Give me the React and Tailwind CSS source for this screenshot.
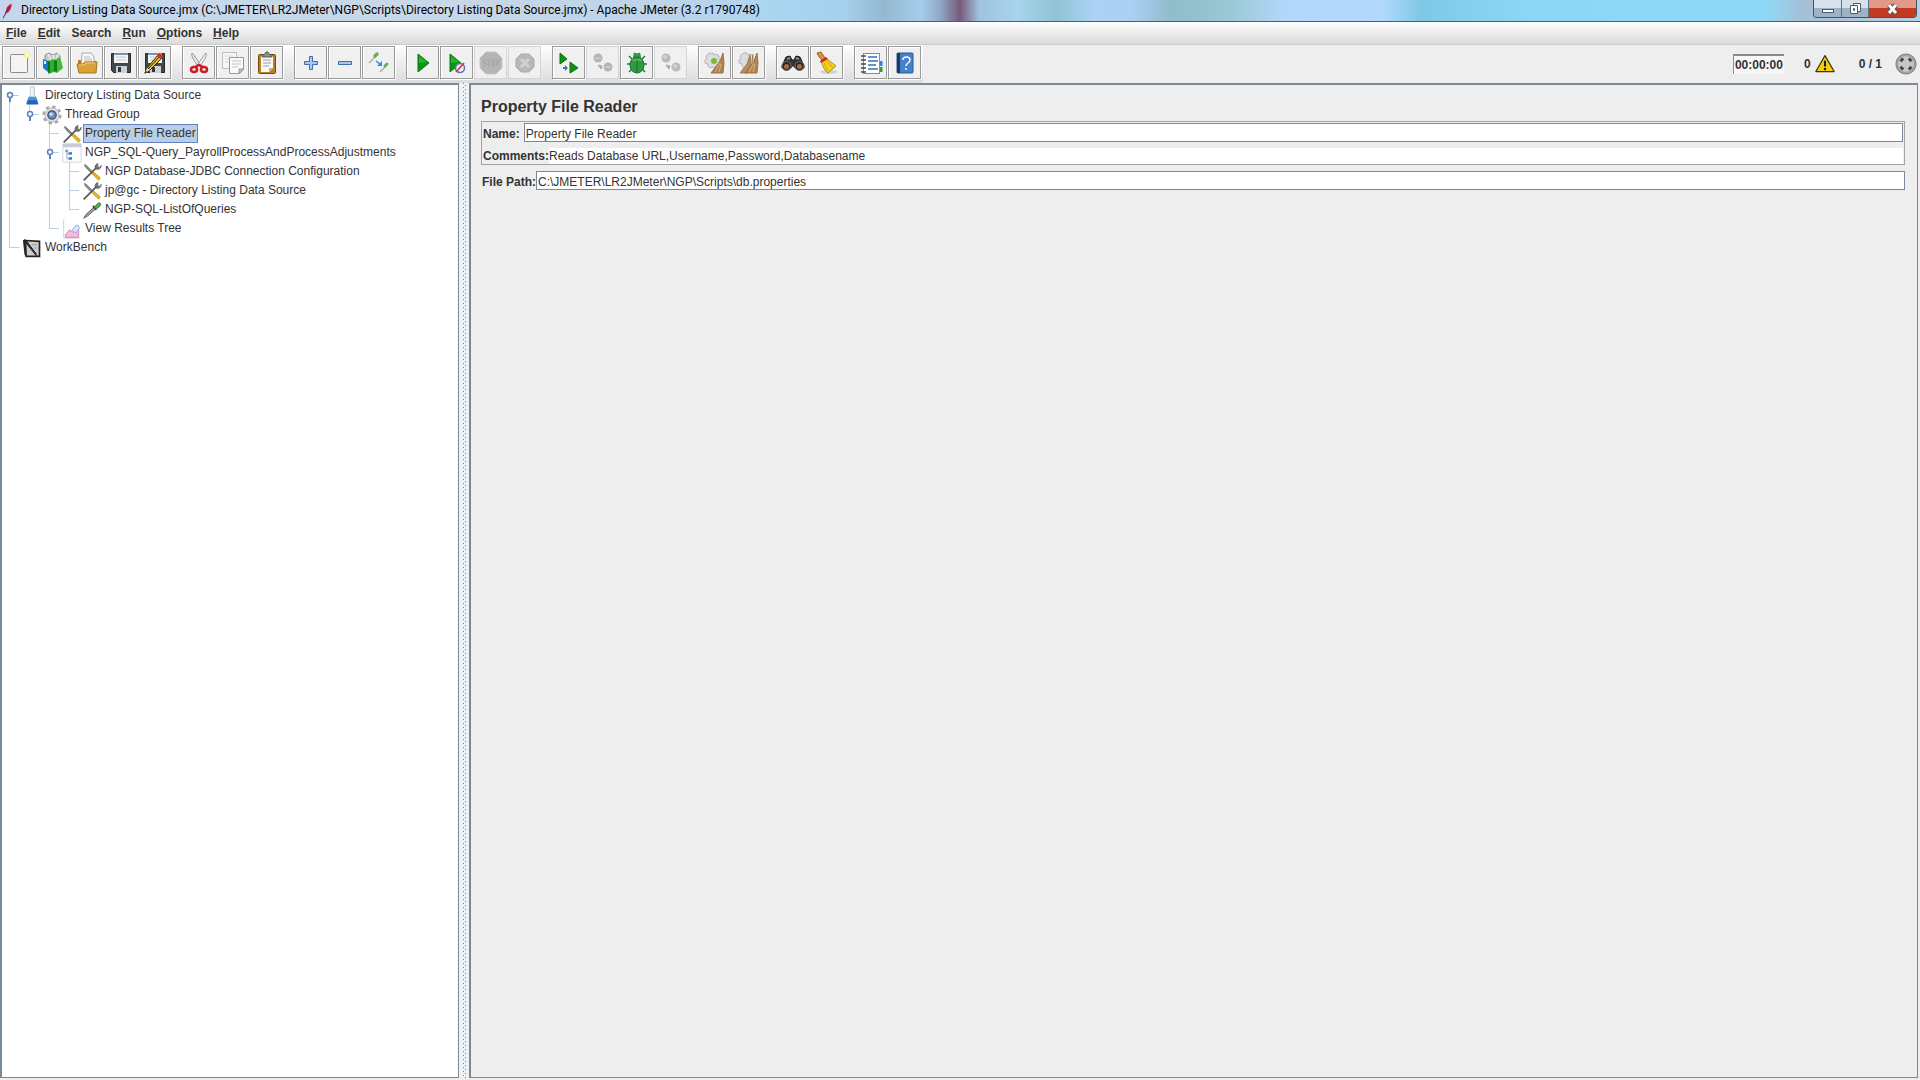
import { useState } from "react";

const Svg = ({ children, size = 24, className = "" }) => (
  <svg width={size} height={size} viewBox="0 0 24 24" fill="none" className={`shrink-0 ${className}`} aria-hidden="true">
    {children}
  </svg>
);

/* ---------- toolbar icons ---------- */

const NewIcon = () => (
  <Svg>
    <rect x="3.5" y="3.5" width="17" height="18" rx="1" fill="#f4f4f2" stroke="#8b8b89" />
    <path d="M6 7v12" stroke="#d9d9d9" strokeDasharray="1 4" />
    <circle cx="20" cy="4" r="3.5" fill="#f8f08a" opacity=".75" />
    <circle cx="20" cy="4" r="2" fill="#fdf9c0" />
  </Svg>
);

const TemplatesIcon = () => (
  <Svg>
    <path d="M4 4l4-2 4 2 4-2 3 3v5l-8 3-7-3z" fill="#c3c8c8" stroke="#8f9696" />
    <path d="M7 3l3 6M12 4l1 5M17 3l-2 6" stroke="#eef0f0" strokeWidth="1.5" />
    <path d="M2 8l5 2v11l-5-4z" fill="#1a78c2" />
    <path d="M4 10v3" stroke="#d9f2ff" strokeWidth="2" />
    <path d="M7 10l6-2v13l-6 2z" fill="#2fae33" />
    <path d="M7 10l2 1v11l-2-1z" fill="#0c7127" />
    <path d="M13 9l6-3 3 11-6 5-3-1z" fill="#43bd31" />
    <path d="M13 9l3 1v11l-3-1z" fill="#157a19" />
  </Svg>
);

const OpenIcon = () => (
  <Svg>
    <path d="M3 9h6l2 1h10v5H3z" fill="#b8801c" />
    <path d="M7 2h9l3 4v9H6z" fill="#f8f8f8" stroke="#aaa" />
    <path d="M9 6h6M9 8h8M9 10h8" stroke="#bcbcbc" />
    <path d="M2 13h6l2-2h12l-1 11H4z" fill="#dca23a" stroke="#a87318" />
    <path d="M4 14h5l2-2h9" stroke="#f6cf7b" />
  </Svg>
);

const Floppy = () => (
  <>
    <path d="M2.5 2.5h19v19h-17l-2-2z" fill="#41474d" stroke="#252a2e" />
    <rect x="5" y="2" width="14" height="10" fill="#f4f6f6" />
    <path d="M5 3h14" stroke="#7895a8" strokeWidth="2" />
    <path d="M7 6h10M7 9h10" stroke="#c4c9cc" />
    <rect x="7" y="15" width="11" height="7" fill="#ccd1d3" />
    <rect x="9" y="16" width="3" height="5" fill="#31373b" />
  </>
);

const SaveIcon = () => (
  <Svg><Floppy /></Svg>
);

const SaveAsIcon = () => (
  <Svg>
    <Floppy />
    <path d="M2 22l2-5L15 4l4 3L7 19z" fill="#e9b62b" stroke="#2c2a22" />
    <path d="M5 18L17 5" stroke="#322c1a" />
    <path d="M14 5l2-3 4 3-2 3z" fill="#d23324" />
    <path d="M2 22l2-5 3 2z" fill="#f2ddb1" />
    <path d="M1 23l2-3 1 1z" fill="#111" />
  </Svg>
);

const CutIcon = () => (
  <Svg>
    <path d="M5 2c-1 3 1 6 6 13l2-2C10 9 8 5 5 2z" fill="#eceded" stroke="#8f9393" />
    <path d="M19 2c1 3-1 6-6 13l-2-2C14 9 16 5 19 2z" fill="#f7f7f7" stroke="#8f9393" />
    <ellipse cx="7" cy="18.5" rx="3" ry="2.5" stroke="#cf1b24" strokeWidth="2.5" />
    <ellipse cx="17" cy="18.5" rx="3" ry="2.5" stroke="#cf1b24" strokeWidth="2.5" />
    <path d="M8 16l4-2 4 2" stroke="#cf1b24" strokeWidth="2.5" />
  </Svg>
);

const CopyIcon = () => (
  <Svg>
    <path d="M1.5 1.5h14v16h-14z" fill="#f7f7f7" stroke="#bdbdbd" />
    <path d="M4 5h8M4 8h4M4 11h4" stroke="#d6d6d6" />
    <path d="M8.5 6.5h14v12l-4 4h-10z" fill="#fafafa" stroke="#999" />
    <path d="M11 10h9M11 13h9M11 16h6" stroke="#c3c3c3" />
    <path d="M18 22v-4h5z" fill="#ccc" stroke="#999" />
  </Svg>
);

const PasteIcon = () => (
  <Svg>
    <rect x="3.5" y="3.5" width="17" height="19" rx="1" fill="#bd7f1e" stroke="#77490c" />
    <path d="M6 5h12v12l-4 4H6z" fill="#fafafa" />
    <path d="M8 9h8M8 12h8M8 15h6" stroke="#9a9a9a" />
    <path d="M14 21v-4h4z" fill="#b5b5b5" />
    <path d="M7 6V4l3-1 1-2h2l1 2 3 1v2z" fill="#8d928d" stroke="#565a56" />
  </Svg>
);

const PlusIcon = () => (
  <Svg><path d="M10.5 5.500h3v5h5v3h-5v5h-3v-5h-5v-3h5z" fill="#a9c8ec" stroke="#3a6db4" /></Svg>
);

const MinusIcon = () => (
  <Svg><path d="M5.500 10.500h13v3h-13z" fill="#a9c8ec" stroke="#3a6db4" /></Svg>
);

const ToggleIcon = () => (
  <Svg>
    <path d="M2 12l6-6" stroke="#a9aea9" strokeWidth="1.5" />
    <path d="M8 5l2-2" stroke="#6ea962" strokeWidth="3.5" strokeLinecap="round" />
    <path d="M13 21l5-5" stroke="#a9aea9" strokeWidth="1.5" />
    <path d="M18 15l2-2" stroke="#6ea962" strokeWidth="3" strokeLinecap="round" />
    <path d="M9 10l4 3" stroke="#3389e5" strokeWidth="1.5" />
    <path d="M15 10v5h-5z" fill="#3389e5" />
  </Svg>
);

const PlayIcon = () => (
  <Svg>
    <path d="M7 3l11 9L7 21z" fill="#0c9413" stroke="#087510" />
    <path d="M8 5l8 6-8 1z" fill="#45c54a" opacity=".6" />
  </Svg>
);

const PlayNoPauseIcon = () => (
  <Svg>
    <path d="M5 3l11 9L5 21z" fill="#0c9413" stroke="#087510" />
    <path d="M6 5l8 6-8 1z" fill="#45c54a" opacity=".6" />
    <circle cx="15" cy="17" r="4.5" fill="#e9edf5" fillOpacity=".8" stroke="#5476ae" strokeWidth="1.5" />
    <path d="M11 21l8-9" stroke="#d63131" strokeWidth="1.5" />
  </Svg>
);

const StopIcon = () => (
  <Svg>
    <path d="M7 1h10l6 6v10l-6 6H7l-6-6V7z" fill="#b5b5b5" stroke="#c8c8c8" />
    <path d="M7 9H4v3h3v3H4M8 9h3M9.500 9v6M13 9h2v6h-2zM18 15V9h2v3h-2" stroke="#a6a6a6" />
  </Svg>
);

const ShutdownIcon = () => (
  <Svg>
    <path d="M8 3h8l5 5v8l-5 5H8l-5-5V8z" fill="#b8b8b8" stroke="#a8a8a8" />
    <path d="M8 8l8 8M16 8l-8 8" stroke="#d2d2d2" strokeWidth="3" />
  </Svg>
);

const RemoteStartIcon = () => (
  <Svg>
    <path d="M3 2l7 6-7 5z" fill="#138f17" stroke="#087510" />
    <path d="M13 11l8 6-8 5z" fill="#138f17" stroke="#087510" />
    <path d="M6 16h2v-2l3 3-3 3v-2H6z" fill="#4177a8" />
  </Svg>
);

const RemoteStopIcon = () => (
  <Svg>
    <circle cx="7" cy="7" r="4.5" fill="#b4b4b4" />
    <circle cx="17" cy="16" r="4.5" fill="#b4b4b4" />
    <path d="M4 7h6M14 16h6" stroke="#cecece" strokeWidth="1.5" />
    <path d="M7 14l4 1-1 3z" fill="#aaa" stroke="#aaa" />
  </Svg>
);

const BugIcon = () => (
  <Svg>
    <path d="M4 5l4 4M20 5l-4 4M2 13h20M4 21l4-4M20 21l-4-4M9 2l2 3M15 2l-2 3" stroke="#267a35" strokeWidth="1.5" />
    <circle cx="12" cy="6" r="4" fill="#37984a" />
    <ellipse cx="12" cy="14" rx="7" ry="8" fill="#2f9b43" stroke="#1d6c2d" />
    <path d="M12 8v13" stroke="#1d6c2d" />
    <path d="M7 9h10" stroke="#77c583" />
  </Svg>
);

const RemoteShutdownIcon = () => (
  <Svg>
    <circle cx="7" cy="7" r="4.5" fill="#bababa" />
    <circle cx="17" cy="16" r="4.5" fill="#bababa" />
    <circle cx="6" cy="6" r="2" fill="#d0d0d0" />
    <circle cx="16" cy="15" r="2" fill="#d0d0d0" />
    <path d="M7 14l4 1-1 3z" fill="#aaa" stroke="#aaa" />
  </Svg>
);

const ClearIcon = ({ all }) => (
  <Svg>
    <path d="M7 2h3l1 2 3-1 2 2v3l2 2-1 3-2 1v2l-3 1-2-1-3 1-2-2v-2l-3-1v-3l2-1-1-3 2-2z" fill="#dcdede" stroke="#b3b7b7" />
    {!all && <circle cx="11" cy="10" r="3" fill="#78bd31" />}
    {all && <path d="M13 4l-3 9-7 9h7l4-9z" fill="#b98d5b" stroke="#a07a52" />}
    <path d="M20 2l-3 8-9 12h12l1-10z" fill="#b18350" stroke="#98704a" />
    <path d="M17 12l-5 9M18 13l-2 8" stroke="#d8b380" />
    {all && <path d="M16 3l-1 8" stroke="#98704a" />}
  </Svg>
);

const SearchIcon = () => (
  <Svg>
    <path d="M5 6l4-1 2 4h2l2-4 4 1 4 9v2h-9l-2-3-2 3H1v-2z" fill="#33373a" stroke="#191b1d" />
    <circle cx="5.5" cy="15" r="4.5" fill="#25282b" stroke="#6c7074" />
    <circle cx="18.5" cy="15" r="4.5" fill="#25282b" stroke="#6c7074" />
    <circle cx="5.5" cy="15.5" r="2.5" fill="#b3683c" />
    <circle cx="18.5" cy="15.5" r="2.5" fill="#b3683c" />
    <path d="M6 8l3-1M15 7l3 1" stroke="#9a9ea1" strokeWidth="1.5" />
  </Svg>
);

const ResetSearchIcon = () => (
  <Svg>
    <ellipse cx="14" cy="21" rx="9" ry="2" fill="#d4d4d4" />
    <path d="M2 2l4-1 4 6-3 2-3-3z" fill="#d79343" stroke="#9e6121" />
    <path d="M6 10l5-3 10 8-8 7c-3-2-5-6-7-12z" fill="#f3cf22" stroke="#b89310" />
    <path d="M5 10l6-4 2 2-7 4z" fill="#c92a24" />
    <path d="M9 12l4 8M12 10l6 7" stroke="#cfa615" />
  </Svg>
);

const FunctionHelperIcon = () => (
  <Svg>
    <path d="M22 10v5" stroke="#3b7edb" strokeWidth="3" />
    <path d="M22 16v5" stroke="#24a438" strokeWidth="3" />
    <rect x="4.5" y="2.500" width="16" height="20" fill="#fff" stroke="#8b8b8b" />
    <path d="M2 5h5M2 9h5M2 13h5M2 17h5M2 21h5" stroke="#4b4b4b" strokeWidth="1.5" />
    <path d="M9 6h9M9 10h10M9 14h8M9 18h10" stroke="#3275b8" strokeWidth="1.5" />
  </Svg>
);

const HelpIcon = () => (
  <Svg>
    <rect x="4" y="2" width="16" height="20" rx="1" fill="#4381cb" stroke="#295a98" />
    <rect x="4" y="2" width="3" height="20" fill="#26384f" />
    <path d="M10 9c0-4 7-4 7 0 0 3-4 3-4 6" stroke="#fff" strokeWidth="1.5" />
    <circle cx="13" cy="18" r="1" fill="#fff" />
  </Svg>
);

const WarningIcon = () => (
  <Svg size={20}>
    <path d="M12 2l11 19H1z" fill="#f6ce0c" stroke="#3c350f" strokeWidth="1.5" strokeLinejoin="round" />
    <path d="M12 8v7" stroke="#1f1b05" strokeWidth="2.5" />
    <circle cx="12" cy="18" r="1.5" fill="#1f1b05" />
  </Svg>
);

const ConnectionIcon = () => (
  <Svg size={22}>
    <circle cx="12" cy="12" r="11" fill="#a3a3a3" stroke="#777" />
    <circle cx="12" cy="12" r="8.5" fill="#c7c7c7" />
    <path d="M9 6L6 9M15 6l3 3M6 15l3 3M18 15l-3 3" stroke="#444" strokeWidth="3" />
  </Svg>
);

/* ---------- tree icons ---------- */

const FlaskIcon = () => (
  <Svg size={20}>
    <path d="M10 1h5v9l4 11c0 2-14 2-14 0l5-11z" fill="#e2e9f0" stroke="#c1cbd6" />
    <path d="M8 13h9l3 9H5z" fill="#4f93d8" />
    <path d="M7 17h11l1 5H6z" fill="#2165b4" />
    <path d="M12 2v9" stroke="#fff" strokeWidth="1.5" />
  </Svg>
);

const GearIcon = () => (
  <Svg size={20}>
    <circle cx="12" cy="12" r="10" stroke="#a4a8ad" strokeWidth="3" strokeDasharray="4 3.850" />
    <circle cx="12" cy="12" r="8.5" fill="#dfe1e3" stroke="#a5a9ad" />
    <circle cx="12" cy="12" r="5" fill="#6a91c7" stroke="#40536d" strokeWidth="1.5" />
    <circle cx="11" cy="11" r="2" fill="#cfe1f6" />
  </Svg>
);

const ToolsIcon = () => (
  <Svg size={20}>
    <path d="M3 3l2 1 8 8-1 2L4 6z" fill="#8d908d" stroke="#6a6d69" />
    <path d="M14 12l8 7-2 3-8-8z" fill="#e8b422" stroke="#c2961c" />
    <path d="M2 22L17 7" stroke="#555955" strokeWidth="2" />
    <path d="M16 8c-1-4 1-6 3-6v4l2 1 2-3c0 4-3 6-7 4z" fill="#71756f" stroke="#5b5f5a" />
  </Svg>
);

const ControllerIcon = () => (
  <Svg size={20}>
    <rect x="1" y="1" width="22" height="22" fill="#fcfcfc" stroke="#ccd1d8" />
    <rect x="1" y="1" width="22" height="4" fill="#c8cbd6" />
    <path d="M6 10v9h4M6 13h4" stroke="#8d9cb3" />
    <rect x="8" y="11" width="4" height="3" fill="#3d79c5" />
    <rect x="8" y="17" width="4" height="3" fill="#3d79c5" />
    <rect x="4" y="8" width="3" height="3" fill="#6798d3" />
  </Svg>
);

const SamplerIcon = () => (
  <Svg size={20}>
    <path d="M2 22l3-5L15 8l2 2L7 19z" fill="#9da39b" stroke="#4f554e" />
    <path d="M13 7l4 5" stroke="#314a2e" strokeWidth="2" />
    <path d="M15 8l4-4c3-2 5 1 2 4l-4 3z" fill="#5aa650" stroke="#3b7c34" />
  </Svg>
);

const ListenerIcon = () => (
  <Svg size={20}>
    <path d="M2 1v22h20" stroke="#c8c8d8" />
    <path d="M4 22v-3l5-6 4 3 7-4v10z" fill="#f3bcda" stroke="#d872ab" />
    <path d="M12 14l3-5 4-2 2 4-4 6z" fill="#d5e4f7" stroke="#8ab0e0" />
  </Svg>
);

const WorkbenchIcon = () => (
  <Svg size={20}>
    <path d="M4 3l17 1v18H5z" fill="#cbcecb" stroke="#242424" strokeWidth="2" />
    <path d="M1 2l4 2v18l-2-2z" fill="#262826" />
    <path d="M3 2l2 1 12 16v2L4 5z" fill="#3d3f3d" stroke="#111" />
    <path d="M12 8h6M15 12h3" stroke="#8f938f" />
  </Svg>
);

const FeatherIcon = () => (
  <Svg size={16}>
    <path d="M5 20L8 9c1-4 4-7 8-8 0 6-2 12-9 15z" fill="#c72142" />
    <path d="M3 23L12 6" stroke="#6d2759" strokeWidth="1.5" />
  </Svg>
);

const toolbarGroups = [
  [["New", NewIcon], ["Templates", TemplatesIcon], ["Open", OpenIcon], ["Save", SaveIcon], ["Save as", SaveAsIcon]],
  [["Cut", CutIcon], ["Copy", CopyIcon], ["Paste", PasteIcon]],
  [["Expand all", PlusIcon], ["Collapse all", MinusIcon], ["Toggle", ToggleIcon]],
  [["Start", PlayIcon], ["Start no pauses", PlayNoPauseIcon], ["Stop", StopIcon, true], ["Shutdown", ShutdownIcon, true]],
  [["Remote start all", RemoteStartIcon], ["Remote stop all", RemoteStopIcon, true], ["Debug", BugIcon], ["Remote shutdown all", RemoteShutdownIcon, true]],
  [["Clear", ClearIcon], ["Clear all", ClearIcon]],
  [["Search", SearchIcon], ["Reset search", ResetSearchIcon]],
  [["Function helper", FunctionHelperIcon], ["Help", HelpIcon]],
];

const menus = [
  ["F", "ile"],
  ["E", "dit"],
  ["", "Search"],
  ["R", "un"],
  ["O", "ptions"],
  ["H", "elp"],
];

// guides: one entry for each 20px column in front of the icon
const treeRows = [
  { label: "Directory Listing Data Source", icon: FlaskIcon, guides: ["root"] },
  { label: "Thread Group", icon: GearIcon, guides: ["line", "lastHandle"] },
  { label: "Property File Reader", icon: ToolsIcon, guides: ["line", "", "tee"] },
  { label: "NGP_SQL-Query_PayrollProcessAndProcessAdjustments", icon: ControllerIcon, guides: ["line", "", "handle"] },
  { label: "NGP Database-JDBC Connection Configuration", icon: ToolsIcon, guides: ["line", "", "line", "tee"] },
  { label: "jp@gc - Directory Listing Data Source", icon: ToolsIcon, guides: ["line", "", "line", "tee"] },
  { label: "NGP-SQL-ListOfQueries", icon: SamplerIcon, guides: ["line", "", "line", "elbow"] },
  { label: "View Results Tree", icon: ListenerIcon, guides: ["line", "", "elbow"] },
  { label: "WorkBench", icon: WorkbenchIcon, guides: ["elbow"] },
];

const guidePaths = {
  root: "M7.5 10v9M7 9.5h10",
  lastHandle: "M7.5 0v10M7 9.5h10",
  handle: "M7.5 0v19M7 9.5h10",
  tee: "M7.5 0v19M7 9.5h10",
  elbow: "M7.5 0v10M7 9.5h10",
  line: "M7.5 0v19",
};

const Guide = ({ type }) => (
  <svg width="20" height="19" viewBox="0 0 20 19" fill="none" className="shrink-0" aria-hidden="true">
    {type && <path d={guidePaths[type]} stroke="#b8cfe5" />}
    {["root", "lastHandle", "handle"].includes(type) && (
      <>
        <path d="M8 11v5" stroke="#6382bf" strokeWidth="2" />
        <circle cx="8" cy="9" r="2.5" fill="#fff" stroke="#6382bf" strokeWidth="1.5" />
      </>
    )}
  </svg>
);

const TitleBar = () => (
  <header className="flex h-[22px] items-start border-b border-[#3f5f7e] bg-[linear-gradient(90deg,#c3d7ec_0%,#c9d8e8_22%,#bcd3e8_36%,#abd6f0_40%,#a6d0ee_44%,#94b8d0_46%,#a4cdec_48%,#8fa6c4_49%,#775a79_50%,#9fc3e0_51%,#a8d4ec_53%,#8fc3d4_55%,#abd3f5_57%,#abd0f2_59%,#90bccb_61%,#9bc8d4_64%,#b3d7fa_67%,#b1d8fb_72%,#7fc9e6_74%,#8ed6f5_80%,#90d8f7_92%,#a6bfd6_94%,#b9cfe3_100%)]">
    <div className="flex flex-1 items-center gap-1 pl-[1px]">
      <FeatherIcon />
      <h1 className="font-['Roboto',sans-serif] text-xs leading-[21px] whitespace-nowrap text-black">
        Directory Listing Data Source.jmx (C:\JMETER\LR2JMeter\NGP\Scripts\Directory Listing Data Source.jmx) - Apache JMeter (3.2 r1790748)
      </h1>
    </div>
    <div className="mr-[3px] flex h-[18px] overflow-hidden rounded-b border border-t-0 border-[#42526b]">
      <button aria-label="Minimize" className="flex w-7 items-center justify-center border-r border-[#5f7088] bg-gradient-to-b from-[#d6e1ec] from-50% to-[#9eb1c6] to-50%">
        <span className="mt-1 h-1 w-3 border border-[#4f5868] bg-white"></span>
      </button>
      <button aria-label="Restore" className="flex w-[27px] items-center justify-center border-r border-[#5f7088] bg-gradient-to-b from-[#d6e1ec] from-50% to-[#9eb1c6] to-50%">
        <svg width="13" height="13" viewBox="0 0 13 13" fill="none" aria-hidden="true">
          <path d="M4.5 1.500h7v8h-7z" fill="#fff" stroke="#4f5868" />
          <path d="M1.500 3.500h7v8h-7z" fill="#fff" stroke="#4f5868" />
          <path d="M4.500 6.500h1v2h-1z" stroke="#4f5868" />
        </svg>
      </button>
      <button aria-label="Close" className="flex w-[47px] items-center justify-center bg-gradient-to-b from-[#e19a89] from-50% to-[#c23a22] to-50%">
        <svg width="13" height="12" viewBox="0 0 13 12" fill="none" aria-hidden="true">
          <path d="M3 2l7 8M10 2l-7 8" stroke="#5a4650" strokeWidth="5" />
          <path d="M3 2l7 8M10 2l-7 8" stroke="#fff" strokeWidth="3" />
        </svg>
      </button>
    </div>
  </header>
);

const ToolButton = ({ label, icon: Icon, disabled }) => (
  <button
    aria-label={label}
    title={label}
    disabled={disabled}
    className={`flex size-[33px] items-center justify-center border bg-[#f0f0f0] ${
      disabled ? "border-[#d4d4d4]" : "border-[#9b9b9b] shadow-[inset_1px_1px_0_#fff,1px_1px_0_#fff]"
    }`}
  >
    <Icon all={label === "Clear all"} />
  </button>
);

const Toolbar = () => (
  <div className="flex h-[38px] items-center bg-[#eee]">
    <div className="flex h-full items-start gap-[11px] bg-gradient-to-b from-white to-[#dcdcdc] pt-[1px] pr-[2px] pl-[2px]">
      {toolbarGroups.map((group) => (
        <div key={group[0][0]} className="flex gap-[1px]">
          {group.map(([label, icon, disabled]) => (
            <ToolButton key={label} label={label} icon={icon} disabled={disabled} />
          ))}
        </div>
      ))}
    </div>
    <div className="ml-auto flex items-center pr-[3px] text-xs font-bold">
      <span className="border-t-2 border-l border-[#8a8a8a] bg-[#f6f6f6] px-[1px] leading-[18px]">00:00:00</span>
      <span className="mr-1 ml-5">0</span>
      <WarningIcon />
      <span className="mr-[13px] ml-6">0 / 1</span>
      <ConnectionIcon />
    </div>
  </div>
);

const Tree = ({ selected, onSelect }) => (
  <nav className="w-[459px] shrink-0 overflow-hidden border-t-2 border-r border-b border-l-2 border-[#7a8a99] bg-white pt-[1px]">
    <ul role="tree">
      {treeRows.map(({ label, icon: Icon, guides }, index) => (
        <li key={label} role="treeitem" aria-selected={selected === index} className="flex h-[19px] items-center">
          {guides.map((type, i) => (
            <Guide key={i} type={type} />
          ))}
          <Icon />
          <button
            onClick={() => onSelect(index)}
            className={`ml-[1px] border px-[1px] leading-[17px] whitespace-nowrap ${
              selected === index ? "border-[#6382bf] bg-[#b8cfe5]" : "border-transparent"
            }`}
          >
            {label}
          </button>
        </li>
      ))}
    </ul>
  </nav>
);

const Splitter = () => (
  <div className="w-[10px] shrink-0 bg-[#eef1f6] px-[4px]">
    <svg width="4" height="100%" className="block h-full" aria-hidden="true">
      <defs>
        <pattern id="bumps" width="4" height="4" patternUnits="userSpaceOnUse">
          <rect x="0" y="0" width="1" height="1" fill="#6f86ab" />
          <rect x="2" y="2" width="1" height="1" fill="#6f86ab" />
        </pattern>
      </defs>
      <rect width="4" height="100%" fill="url(#bumps)" />
    </svg>
  </div>
);

const PropertyPanel = () => {
  const [name, setName] = useState("Property File Reader");
  const [comments, setComments] = useState("Reads Database URL,Username,Password,Databasename");
  const [path, setPath] = useState("C:\\JMETER\\LR2JMeter\\NGP\\Scripts\\db.properties");

  const fieldClass = "h-[19px] min-w-0 flex-1 border border-[#7a8a99] bg-white px-[1px] pt-[2px] outline-none";

  return (
    <main className="mr-[2px] min-w-0 flex-1 border-t-2 border-r border-b border-l-2 border-[#7a8a99] bg-[#eee] pt-[12px] pr-[12px] pl-[10px]">
      <h2 className="text-base leading-5 font-bold">Property File Reader</h2>
      <div className="mt-1 border border-[#a3a3a3] pr-[1px] pl-[1px]">
        <div className="flex items-center pt-[1px]">
          <label htmlFor="name" className="mr-1 pt-[2px] font-bold">Name:</label>
          <input id="name" value={name} onChange={(e) => setName(e.target.value)} className={fieldClass} />
        </div>
        <div className="mt-[6px] flex items-center">
          <label htmlFor="comments" className="font-bold">Comments:</label>
          <input
            id="comments"
            value={comments}
            onChange={(e) => setComments(e.target.value)}
            className="h-4 min-w-0 flex-1 bg-white outline-none"
          />
        </div>
      </div>
      <div className="mt-[6px] flex items-center pl-[1px]">
        <label htmlFor="path" className="pt-[2px] font-bold">File Path:</label>
        <input id="path" value={path} onChange={(e) => setPath(e.target.value)} className={fieldClass} />
      </div>
    </main>
  );
};

const App = () => {
  const [selected, setSelected] = useState(2);

  return (
    <div className="flex min-h-screen flex-col bg-[#eee] font-['Liberation_Sans',Arial,sans-serif] text-xs text-[#333]">
      <TitleBar />
      <div className="flex h-[23px] items-center gap-[11px] border-b border-[#ccc] bg-gradient-to-b from-white to-[#dadada] pl-[6px]">
        {menus.map(([key, rest]) => (
          <button key={rest} className="font-bold">
            <span className="underline">{key}</span>
            {rest}
          </button>
        ))}
      </div>
      <Toolbar />
      <div className="flex flex-1 pb-[2px]">
        <Tree selected={selected} onSelect={setSelected} />
        <Splitter />
        <PropertyPanel />
      </div>
    </div>
  );
};

export default App;
